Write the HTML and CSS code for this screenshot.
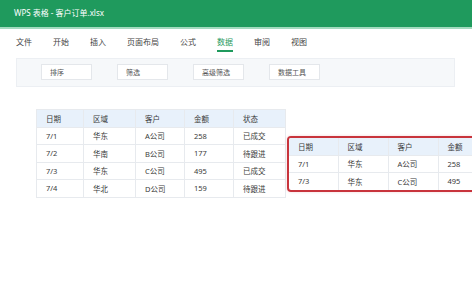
FILE: index.html
```html
<!DOCTYPE html>
<html lang="zh-CN">
<head>
    <meta charset="UTF-8">
    <meta name="viewport" content="width=device-width, initial-scale=1.0">
    <title>WPS 表格 - 客户订单.xlsx</title>
    <link rel="stylesheet" href="styles.css">
</head>
<body>

    <div class="titlebar">WPS 表格 - 客户订单.xlsx</div>

    <nav class="menu">
        <span class="menu-item">文件</span>
        <span class="menu-item">开始</span>
        <span class="menu-item">插入</span>
        <span class="menu-item">页面布局</span>
        <span class="menu-item">公式</span>
        <span class="menu-item active">数据</span>
        <span class="menu-item">审阅</span>
        <span class="menu-item">视图</span>
    </nav>

    <div class="toolbar">
        <button class="tool">排序</button>
        <button class="tool">筛选</button>
        <button class="tool">高级筛选</button>
        <button class="tool">数据工具</button>
    </div>

    <div class="sheets">
        <table class="grid source">
            <colgroup>
                <col style="width: 47px">
                <col style="width: 52px">
                <col style="width: 49px">
                <col style="width: 49px">
                <col style="width: 52px">
            </colgroup>
            <tr><th>日期</th><th>区域</th><th>客户</th><th>金额</th><th>状态</th></tr>
            <tr><td>7/1</td><td>华东</td><td>A公司</td><td>258</td><td>已成交</td></tr>
            <tr><td>7/2</td><td>华南</td><td>B公司</td><td>177</td><td>待跟进</td></tr>
            <tr><td>7/3</td><td>华东</td><td>C公司</td><td>495</td><td>已成交</td></tr>
            <tr><td>7/4</td><td>华北</td><td>D公司</td><td>159</td><td>待跟进</td></tr>
        </table>

        <div class="result">
            <table class="grid filtered">
                <colgroup>
                    <col style="width: 49px">
                    <col style="width: 50px">
                    <col style="width: 50px">
                    <col style="width: 50px">
                </colgroup>
                <tr><th>日期</th><th>区域</th><th>客户</th><th>金额</th></tr>
                <tr><td>7/1</td><td>华东</td><td>A公司</td><td>258</td></tr>
                <tr><td>7/3</td><td>华东</td><td>C公司</td><td>495</td></tr>
            </table>
        </div>
    </div>

</body>
</html>
```

FILE: styles.css
```css
body {
    margin: 0;
    width: 472px;
    height: 288px;
    overflow: hidden;
    background-color: #ffffff;
    font-family: "Noto Sans", "Noto Sans CJK SC", sans-serif;
    color: #3a3a3a;
}

.titlebar {
    height: 27px;
    line-height: 26px;
    padding-left: 14px;
    background-color: #1f9a5d;
    border-bottom: 2px solid #a3dbbf;
    color: white;
    font-size: 8px;
}

.menu {
    display: flex;
    gap: 21px;
    padding-left: 16px;
}

.menu-item {
    padding-top: 8px;
    padding-bottom: 3px;
    line-height: 10px;
    font-size: 8px;
    color: #444;
    border-bottom: 2px solid transparent;
}

.menu-item.active {
    color: #1f9a5d;
    border-bottom-color: #1f9a5d;
}

.toolbar {
    display: flex;
    gap: 25px;
    margin: 6px 17px 0 16px;
    padding: 5px 0 0 24px;
    box-sizing: border-box;
    height: 29px;
    background-color: #f6f8fa;
    border: 1px solid #eceff3;
}

.tool {
    width: 51px;
    height: 16px;
    padding: 0 0 0 8px;
    text-align: left;
    background-color: white;
    border: 1px solid #e4e7eb;
    font-family: inherit;
    font-size: 7px;
    color: #555;
}

.sheets {
    display: flex;
    align-items: flex-start;
    margin-top: 22px;
    padding-left: 36px;
}

.grid {
    flex-shrink: 0;
    border-collapse: collapse;
    table-layout: fixed;
    font-size: 7.5px;
}

.source {
    width: 249px;
}

.filtered {
    width: 199px;
}

.grid th,
.grid td {
    height: 16.5px;
    padding: 0 0 0 9px;
    text-align: left;
    font-weight: normal;
    border: 1px solid #e7eaee;
    white-space: nowrap;
    overflow: hidden;
}

.grid th {
    background-color: #e8f1fb;
}

.result {
    flex-shrink: 0;
    margin-top: 27px;
    margin-left: 1px;
    border: 2px solid #c8343c;
    border-radius: 4px;
    box-shadow: 0 0 3px rgba(200, 52, 60, 0.2);
    overflow: hidden;
}

.result .grid th,
.result .grid td {
    border-top: none;
    border-left: none;
}

.result .grid tr:last-child td {
    border-bottom: none;
}
```
